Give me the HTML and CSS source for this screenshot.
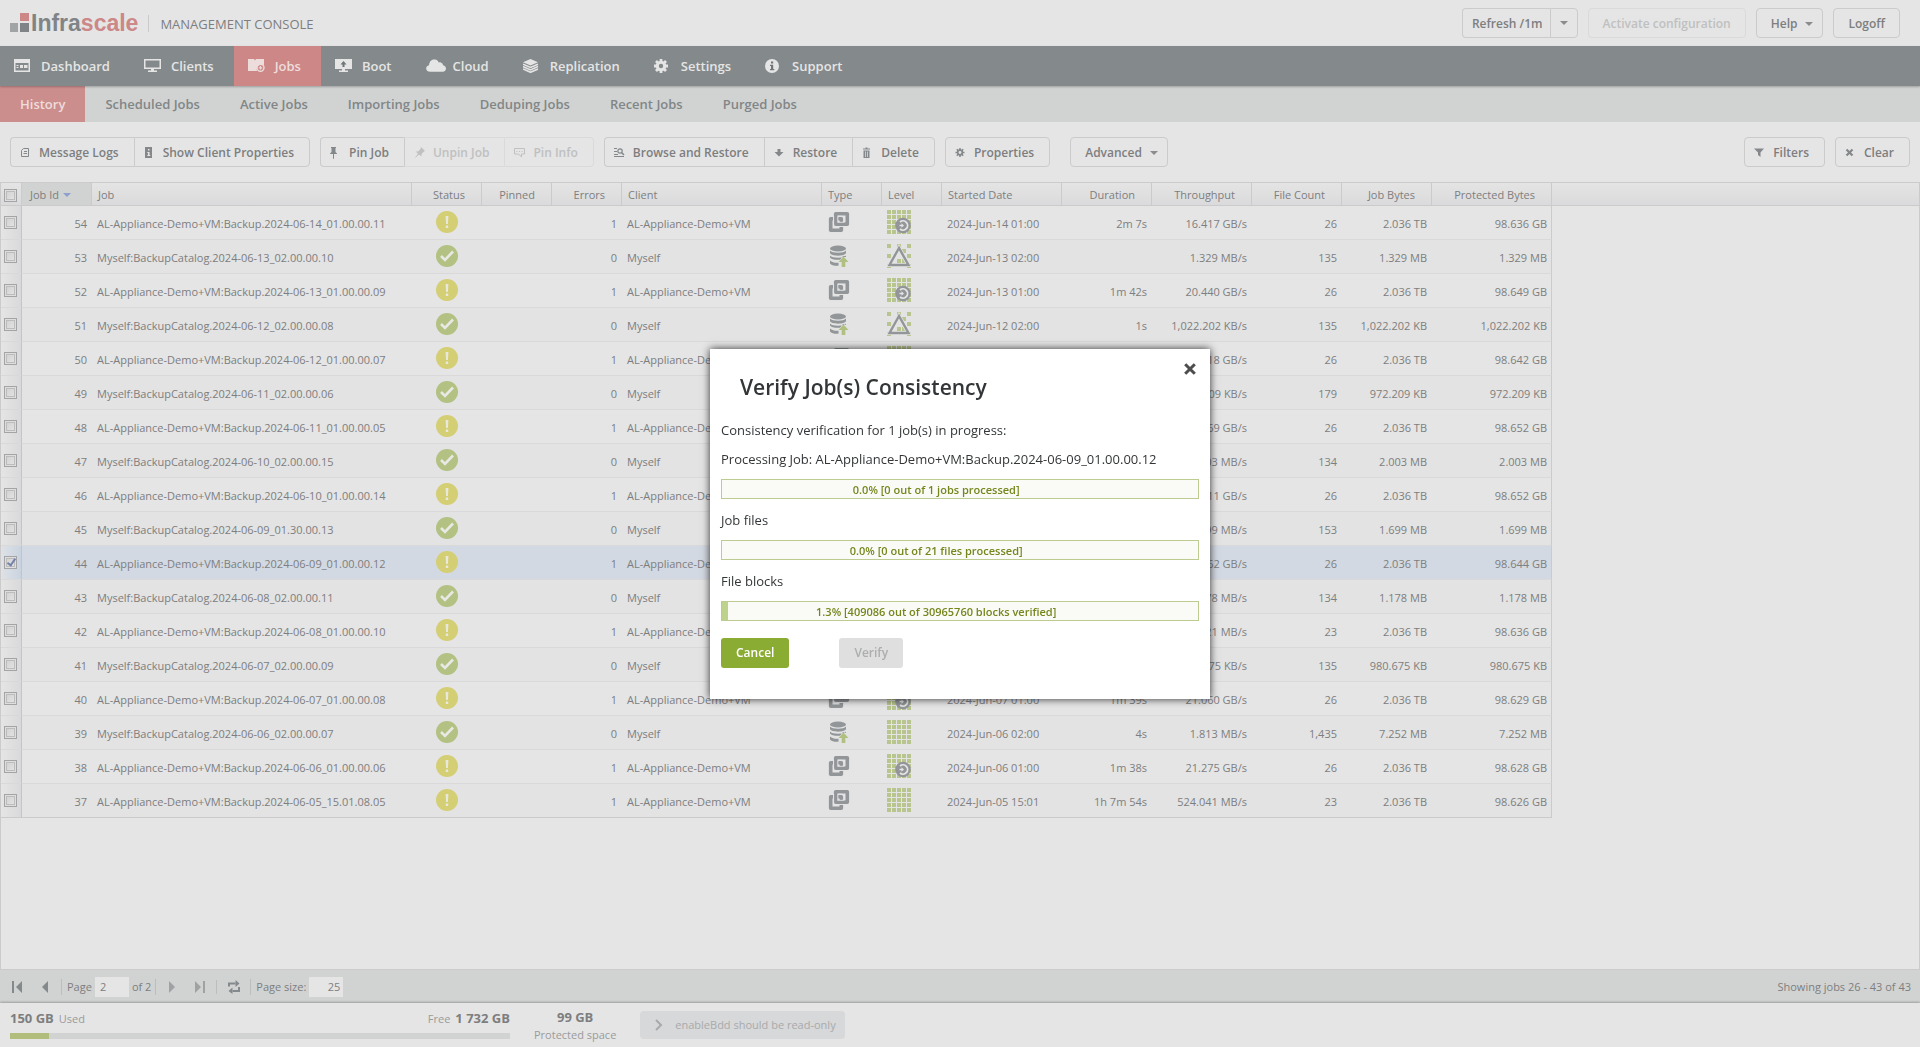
FILE: index.html
```html
<!DOCTYPE html>
<html lang="en">
<head>
    <meta charset="UTF-8">
    <meta name="viewport" content="width=device-width, initial-scale=1.0">
    <title>Infrascale Management Console</title>
    <link rel="stylesheet" href="styles.css">
</head>
<body>
    <!-- shared icons -->
    <svg class="sprite" aria-hidden="true">
        <symbol id="i-warn" viewBox="0 0 22 22"><circle cx="11" cy="11" r="11" fill="#d4ce74"/><path d="M9.6 5h2.8l-.5 8h-1.8zM9.8 14.6h2.4v2.4H9.8z" fill="#e8e8dc"/></symbol>
        <symbol id="i-ok" viewBox="0 0 22 22"><circle cx="11" cy="11" r="11" fill="#b3c183"/><path d="M5 11l4 4 8-8.500" fill="none" stroke="#e8e8e4" stroke-width="2.600"/></symbol>
        <symbol id="i-vm" viewBox="0 0 24 24">
            <g fill="none" stroke-linejoin="round">
                <path d="M8.700 3.700h11.600v10.600H8.700z" stroke="#929698" stroke-width="3.600"/>
                <path d="M3.700 8.700h10.600v11.600H3.700z" stroke="#e3e3e3" stroke-width="6"/>
                <path d="M3.700 8.700h10.600v11.600H3.700z" stroke="#929698" stroke-width="3.600"/>
                <path d="M8.700 6v8.300H17" stroke="#e3e3e3" stroke-width="5.400" stroke-linejoin="miter"/>
                <path d="M8.700 4v10.300H20" stroke="#929698" stroke-width="3.200"/>
                <path d="M11.800 8.700h2.500v3" stroke="#929698" stroke-width="2.400"/>
            </g>
        </symbol>
        <symbol id="i-db" viewBox="0 0 24 24">
            <g fill="#929698"><ellipse cx="11" cy="4.500" rx="8" ry="3"/><path d="M3 6.500c2 3 14 3 16 0V9c-1 3.500-15 3.500-16 0zM3 11.500c2 3 14 3 16 0V13l-3-1-3 3.700c-4 .4-9-.2-10-2.200zM3 16.500c2 2 5 2.500 8.500 2.300v3C8 22 4 21.500 3 19.500z"/></g>
            <path d="M16.500 12.500l5 5.500h-3.200v5h-3.600v-5h-3.200z" fill="#b0c080"/>
        </symbol>
        <symbol id="i-full" viewBox="0 0 24 24">
            <path d="M2 0v24M7 0v24M12 0v24M17 0v24M22 0v24" stroke="#b9c58e" stroke-width="4"/>
            <path d="M0 4.500h24M0 9.500h24M0 14.500h24M0 19.500h24" stroke="#e4e4e2"/>
        </symbol>
        <symbol id="i-inc" viewBox="0 0 24 24">
            <use href="#i-full"/>
            <circle cx="16" cy="15.500" r="7.800" fill="#929698"/>
            <path d="M13 12a4.600 4.600 0 1 1 0 7" fill="none" stroke="#e4e4e4" stroke-width="1.800"/>
            <path d="M12.500 14.700h2v-1.500l2.500 2.300-2.500 2.300v-1.500h-2z" fill="#e4e4e4"/>
        </symbol>
        <symbol id="i-diff" viewBox="0 0 24 24">
            <path d="M0 0h4v4H0zM10 0h4v4h-4zM20 0h4v4h-4zM15 5h4v4h-4zM0 10h4v4H0zM20 10h4v4h-4zM10 15h4v4h-4zM15 15h4v4h-4zM0 20h4v4H0zM20 20h4v4h-4z" fill="#b9c58e"/>
            <path d="M12 4L2.500 21h19z" fill="none" stroke="#e4e4e4" stroke-width="4"/>
            <path d="M12 4L2.500 21h19z" fill="none" stroke="#929698" stroke-width="2.400"/>
        </symbol>
    </svg>

    <header class="top">
        <a href="#" class="logo" aria-label="Infrascale">
            <svg width="20" height="20" viewBox="0 0 20 20"><path d="M0 10h8v9H0z" fill="#a1a4a4"/><path d="M10 0h9v8h-9z" fill="#cc8786"/><path d="M10 10h9v9h-9z" fill="#808487"/></svg>
            <span>Infra<b>scale</b></span>
        </a>
        <span class="product">MANAGEMENT CONSOLE</span>
        <div class="top-buttons">
            <div class="group">
                <button class="btn btn-refresh">Refresh /1m</button>
                <button class="btn btn-drop" aria-label="Refresh interval"><i class="caret"></i></button>
            </div>
            <button class="btn" disabled>Activate configuration</button>
            <button class="btn btn-menu">Help<i class="caret"></i></button>
            <button class="btn">Logoff</button>
        </div>
    </header>

    <nav class="main-nav">
        <a href="#"><svg viewBox="0 0 20 14"><path d="M0 0h16v13H0zM1.500 4v7.500h13V4z" fill="#e5e5e5" fill-rule="evenodd"/><path d="M2.500 6h2v1h-2zM2.500 8h2v1h-2zM6 6h3v3H6zM10 6h3.500v3H10z" fill="#e5e5e5"/></svg>Dashboard</a>
        <a href="#"><svg viewBox="0 0 20 14"><path d="M0 0h17v10H0zM1.500 1.500v7h14v-7z" fill="#e5e5e5" fill-rule="evenodd"/><path d="M7 10h3v1.500h3V13H4v-1.500h3z" fill="#e5e5e5"/></svg>Clients</a>
        <a href="#" class="active"><svg viewBox="0 0 20 14"><path d="M0 0h6l1 1.500L8 0h8v6a5 5 0 0 0-7 6H0z" fill="#eddcdc"/><circle cx="12.500" cy="8.800" r="3.500" fill="none" stroke="#eddcdc" stroke-width="1.400"/><path d="M12.500 7v3.600M10.700 8.800h3.600" stroke="#eddcdc" stroke-width="1.200"/></svg>Jobs</a>
        <a href="#"><svg viewBox="0 0 20 14"><path d="M0 0h17v10H0z" fill="#e5e5e5"/><path d="M8.500 2l3 3.500h-2V8h-2V5.500h-2z" fill="#6f7578"/><path d="M7 10h3v1.500h3V13H4v-1.500h3z" fill="#e5e5e5"/></svg>Boot</a>
        <a href="#"><svg viewBox="0 0 21 14"><path d="M4.500 13C-1 13-1 7 3.200 6.300 3.500 2 6-.5 9.500.2c2 .3 3.200 1.500 3.800 3 2.500-.6 4.400 1 4.600 3C22.300 7 21.800 13 17.500 13z" fill="#e5e5e5"/></svg>Cloud</a>
        <a href="#"><svg viewBox="0 0 20 14"><path d="M7.500 0L15 3.300 7.500 6.600 0 3.300z" fill="#e5e5e5"/><path d="M0 5.200L7.500 8.500 15 5.200M0 7.600l7.500 3.300L15 7.600M0 10l7.500 3.300L15 10" fill="none" stroke="#e5e5e5" stroke-width="1.600"/></svg>Replication</a>
        <a href="#"><svg viewBox="0 0 20 14"><circle cx="7" cy="7" r="3.700" fill="none" stroke="#e5e5e5" stroke-width="3"/><path d="M7 0v3M7 11v3M0 7h3M11 7h3M2 2l2 2M10 10l2 2M12 2l-2 2M4 10l-2 2" stroke="#e5e5e5" stroke-width="2.800"/></svg>Settings</a>
        <a href="#"><svg viewBox="0 0 20 14"><circle cx="7" cy="7" r="7" fill="#e5e5e5"/><path d="M6 2.500h2.200v2H6zM5 5.700h3.200v4.300H9.300v1.300H5V10h1V7H5z" fill="#6f7578"/></svg>Support</a>
    </nav>

    <nav class="sub-nav">
        <a href="#" class="active">History</a>
        <a href="#">Scheduled Jobs</a>
        <a href="#">Active Jobs</a>
        <a href="#">Importing Jobs</a>
        <a href="#">Deduping Jobs</a>
        <a href="#">Recent Jobs</a>
        <a href="#">Purged Jobs</a>
    </nav>

    <div class="toolbar">
        <div class="group">
            <button class="btn btn-icon"><svg viewBox="0 0 12 12"><path d="M3.500 1.500h5v8h-7v-6zM4 4.500h3M3.500 6.500H7" fill="none" stroke="currentColor"/></svg>Message Logs</button>
            <button class="btn btn-icon"><svg viewBox="0 0 12 12"><path d="M1 0h7v11H1z" fill="currentColor"/><path d="M4 2h1.500v1.500H4zM3.300 5h2.200v3h.8v1h-3V8H4V6h-.7z" fill="#e5e5e5"/></svg>Show Client Properties</button>
        </div>
        <div class="group">
            <button class="btn btn-icon"><svg viewBox="0 0 12 12"><path d="M1 0h5v1H5.500v4L7 6.500V7H4v4.500L3.500 12 3 11.500V7H0v-.5L1.500 5V1H1z" fill="currentColor"/></svg>Pin Job</button>
            <button class="btn btn-icon" disabled><svg viewBox="0 0 12 12"><path d="M7 0l4 4-1 .5-2.500 2.500v2.500L5 7.500.5 11.500 4 6.500 1.500 4.500H4L6.500 2z" fill="currentColor"/></svg>Unpin Job</button>
            <button class="btn btn-icon" disabled><svg viewBox="0 0 12 12"><path d="M.5 1.500h10v5.500h-3v3l-3-3h-4zM2.500 4.500h1M5 4.500h1M7.500 4.500h1" fill="none" stroke="currentColor"/></svg>Pin Info</button>
        </div>
        <div class="group">
            <button class="btn btn-icon"><svg viewBox="0 0 12 12"><path d="M0 1.500h3M0 4.500h3M0 7.500h4M0 9.500h10" stroke="currentColor"/><circle cx="6" cy="4" r="2.200" fill="none" stroke="currentColor" stroke-width="1.200"/><path d="M7.500 5.500L10 8" stroke="currentColor" stroke-width="1.600"/></svg>Browse and Restore</button>
            <button class="btn btn-icon"><svg viewBox="0 0 12 12"><path d="M3.500 2h3v3h3L5 9.500.5 5h3z" fill="currentColor"/></svg>Restore</button>
            <button class="btn btn-icon"><svg viewBox="0 0 12 12"><path d="M1 1.500h2.500V.5h2v1H8v1H1zM1.500 3.500h6V11h-6z" fill="currentColor"/><path d="M3.500 4.500v5.500M5.500 4.500v5.500" stroke="#e5e5e5" stroke-width=".7"/></svg>Delete</button>
        </div>
        <button class="btn btn-icon"><svg viewBox="0 0 12 12"><circle cx="5" cy="5.500" r="2.300" fill="none" stroke="currentColor" stroke-width="1.700"/><path d="M5 1v2M5 8v2M.5 5.500h2M7.500 5.500h2M1.800 2.300l1.400 1.400M6.800 7.300l1.400 1.400M8.200 2.300L6.800 3.700M3.200 7.300L1.800 8.700" stroke="currentColor" stroke-width="1.500"/></svg>Properties</button>
        <button class="btn btn-menu advanced">Advanced<i class="caret"></i></button>
        <div class="toolbar-right">
            <button class="btn btn-icon"><svg viewBox="0 0 12 12"><path d="M0 1.500h10L6.500 5.500v4.500L4 8V5.500z" fill="currentColor"/></svg>Filters</button>
            <button class="btn btn-icon"><svg viewBox="0 0 12 12"><path d="M1.500 2.500l6 6M7.500 2.500l-6 6" stroke="currentColor" stroke-width="2.200"/></svg>Clear</button>
        </div>
    </div>

    <main class="grid">
        <table>
            <colgroup>
                <col class="w-check"><col class="w-70"><col class="w-job"><col class="w-70"><col class="w-70"><col class="w-70"><col class="w-client">
                <col class="w-60"><col class="w-60"><col class="w-date"><col class="w-90"><col class="w-100"><col class="w-90"><col class="w-90"><col class="w-date"><col>
            </colgroup>
            <thead>
                <tr>
                    <th class="check"><input type="checkbox" aria-label="Select all jobs"></th>
                    <th class="sorted">Job Id <i class="caret"></i></th>
                    <th>Job</th>
                    <th class="num">Status</th>
                    <th class="num">Pinned</th>
                    <th class="num">Errors</th>
                    <th>Client</th>
                    <th>Type</th>
                    <th>Level</th>
                    <th>Started Date</th>
                    <th class="num">Duration</th>
                    <th class="num">Throughput</th>
                    <th class="num">File Count</th>
                    <th class="num">Job Bytes</th>
                    <th class="num">Protected Bytes</th>
                    <th></th>
                </tr>
            </thead>
            <tbody id="jobs"></tbody>
        </table>
    </main>

    <div class="pager">
        <button aria-label="First page"><svg width="12" height="12" viewBox="0 0 12 12"><path d="M1 0h2v12H1zM11 0v12L5 6z" fill="currentColor"/></svg></button>
        <button aria-label="Previous page"><svg width="12" height="12" viewBox="0 0 12 12"><path d="M9 0v12L3 6z" fill="currentColor"/></svg></button>
        <label for="page">Page</label>
        <input type="text" id="page" value="2">
        <span class="of">of 2</span>
        <button class="off" aria-label="Next page"><svg width="12" height="12" viewBox="0 0 12 12"><path d="M3 0v12l6-6z" fill="currentColor"/></svg></button>
        <button class="off" aria-label="Last page"><svg width="12" height="12" viewBox="0 0 12 12"><path d="M9 0h2v12H9zM1 0v12l6-6z" fill="currentColor"/></svg></button>
        <button class="reload" aria-label="Reload"><svg width="12" height="14" viewBox="0 0 12 14"><path d="M1 6.500V3.500h6.500M11 7v4H4.500" fill="none" stroke="currentColor" stroke-width="2"/><path d="M7.500 0l4 3.500-4 3.500zM4.500 7.500v6.500L.5 11z" fill="currentColor"/></svg></button>
        <label for="page-size">Page size:</label>
        <input type="text" id="page-size" class="size" value="25">
        <span class="showing">Showing jobs 26 - 43 of 43</span>
    </div>

    <footer class="status-bar">
        <div class="storage">
            <div class="storage-text">
                <span><b>150 GB</b>Used</span>
                <span>Free<b>1 732 GB</b></span>
            </div>
            <div class="storage-bar"><div style="width: 7.8%"></div></div>
        </div>
        <div class="protected"><b>99 GB</b>Protected space</div>
        <button class="notice" disabled><svg width="8" height="12" viewBox="0 0 8 12"><path d="M1 1l5 5-5 5" fill="none" stroke="currentColor" stroke-width="2"/></svg>enableBdd should be read-only</button>
    </footer>

    <div class="overlay">
        <div class="dialog" role="dialog" aria-labelledby="dialog-title">
            <button class="close" aria-label="Close"><svg width="12" height="12" viewBox="0 0 12 12"><path d="M1.200 1.200l9.600 9.600M10.800 1.200l-9.600 9.600" stroke="#4d4d4f" stroke-width="3"/></svg></button>
            <h1 id="dialog-title">Verify Job(s) Consistency</h1>
            <p>Consistency verification for 1 job(s) in progress:</p>
            <p>Processing Job: AL-Appliance-Demo+VM:Backup.2024-06-09_01.00.00.12</p>
            <div class="progress"><span>0.0% [0 out of 1 jobs processed]</span></div>
            <p>Job files</p>
            <div class="progress"><span>0.0% [0 out of 21 files processed]</span></div>
            <p>File blocks</p>
            <div class="progress"><div class="fill" style="width: 1.3%"></div><span>1.3% [409086 out of 30965760 blocks verified]</span></div>
            <div class="actions">
                <button class="cancel">Cancel</button>
                <button class="verify" disabled>Verify</button>
            </div>
        </div>
    </div>

    <script src="script.js"></script>
</body>
</html>
```

FILE: styles.css
```css
:root {
    --bg: #e5e5e5;
    --line: #cbcbcb;
    --text: #7d7e7f;
    --bar: #d1d3d2;
    --nav: #84898b;
    --red: #cc8786;
    --green: #8aac32;
}

* {
    margin: 0;
    padding: 0;
    box-sizing: border-box;
}

body {
    display: flex;
    flex-direction: column;
    height: 100vh;
    overflow: hidden;
    background: var(--bg);
    color: var(--text);
    font: 11px/16px "Open Sans", sans-serif;
}

button, input {
    font: inherit;
    color: inherit;
}

a {
    color: inherit;
    text-decoration: none;
}

.sprite {
    position: absolute;
    width: 0;
    height: 0;
}

/* top bar */
.top {
    display: flex;
    align-items: center;
    height: 46px;
    padding: 0 20px 0 10px;
}

.logo {
    display: flex;
    align-items: center;
    gap: 1px;
    color: #808487;
    font: bold 23px/26px "Liberation Sans", Arial, sans-serif;
}

.logo b {
    color: var(--red);
}

.product {
    margin-left: 10px;
    padding: 1px 0 0 11px;
    border-left: 1px solid var(--line);
    font-size: 13px;
}

.top-buttons {
    display: flex;
    gap: 10px;
    margin-left: auto;
}

.btn {
    display: flex;
    align-items: center;
    height: 30px;
    padding: 1px 14px 0;
    border: 1px solid var(--line);
    border-radius: 4px;
    background: none;
    font-size: 12px;
    font-weight: 600;
    white-space: nowrap;
}

.btn:disabled {
    color: #bfc0c0;
    border-color: #dadada;
}

.group {
    display: flex;
}

.group .btn:not(:last-child) {
    border-right: 0;
    border-top-right-radius: 0;
    border-bottom-right-radius: 0;
}

.group .btn:not(:first-child) {
    border-top-left-radius: 0;
    border-bottom-left-radius: 0;
}

.group .btn:enabled + .btn:disabled {
    border-left-color: var(--line);
}

.btn-refresh {
    padding: 1px 7px 0 9px;
}

.btn-drop {
    padding: 0 9px;
}

.btn-menu {
    gap: 8px;
    padding-right: 9px;
}

.caret {
    display: inline-block;
    border: 4px solid transparent;
    border-top-color: #8a8c8e;
    border-bottom: 0;
}

/* navigation */
.main-nav {
    display: flex;
    height: 40px;
    background: var(--nav);
    box-shadow: 0 1px 2px rgba(0, 0, 0, 0.25);
    position: relative;
    color: #e5e5e5;
    font-size: 13px;
    font-weight: 600;
}

.main-nav a {
    display: flex;
    align-items: center;
    padding: 0 20px 0 14px;
}

.main-nav svg {
    flex: none;
    width: 20px;
    height: 14px;
    margin-right: 7px;
}

.main-nav .active {
    background: var(--red);
    color: #efdcdc;
}

.sub-nav {
    display: flex;
    height: 36px;
    background: var(--bar);
    color: #818687;
    font-size: 13px;
    font-weight: 600;
}

.sub-nav a {
    padding: 0 20px;
    line-height: 36px;
}

.sub-nav .active {
    background: #cc8e8d;
    color: #efdcdc;
}

/* toolbar */
.toolbar {
    display: flex;
    gap: 10px;
    padding: 15px 10px;
}

.toolbar-right {
    display: flex;
    gap: 10px;
    margin-left: auto;
}

.btn-icon {
    padding: 1px 15px 0 9px;
}

.btn-icon svg {
    width: 12px;
    height: 12px;
    margin-right: 7px;
    color: #84888a;
}

.btn:disabled svg {
    color: inherit;
}

.advanced {
    margin-left: 10px;
}

/* jobs table */
.grid {
    flex: 1;
    border: 1px solid var(--line);
    border-bottom: 0;
    overflow: hidden;
}

table {
    width: 100%;
    table-layout: fixed;
    border-spacing: 0;
}

.w-check { width: 21px; }
.w-60 { width: 60px; }
.w-70 { width: 70px; }
.w-90 { width: 90px; }
.w-100 { width: 100px; }
.w-date { width: 120px; }
.w-client { width: 200px; }
.w-job { width: 320px; }

th {
    height: 23px;
    padding: 1px 6px 0;
    border-right: 1px solid var(--line);
    border-bottom: 1px solid var(--line);
    background: linear-gradient(#e4e4e4, #e0e0e1 45%, #dadadc);
    font-weight: 400;
    text-align: left;
}

th:last-child {
    border-right: 0;
}

th.num {
    padding-right: 16px;
    text-align: right;
}

th.sorted {
    padding-left: 8px;
    background: #d1d3d2;
}

th .caret {
    border-top-color: #8ba0cc;
    margin: 0 0 2px 1px;
}

td {
    height: 34px;
    padding: 3px 5px 0;
    border-bottom: 1px solid #d9d9d9;
    white-space: nowrap;
}

tr:nth-child(even) td {
    background: #e3e3e3;
}

tr.selected td {
    background: #d3d9e2;
}

tbody tr:last-child td {
    border-bottom-color: var(--line);
}

td:nth-last-child(2) {
    border-right: 1px solid var(--line);
    padding-right: 4px;
}

tr td.filler {
    border: 0;
    background: none;
}

td.num {
    text-align: right;
}

td.icon {
    padding: 0 5px 2px;
}

td.status {
    padding: 0 5px 2px;
    text-align: center;
}

td svg {
    display: inline-block;
    width: 24px;
    height: 24px;
    vertical-align: middle;
}

td.status svg {
    width: 22px;
    height: 22px;
}

th.check {
    padding: 3px 3px 0;
}

td.check {
    padding: 0 3px;
    border-right: 1px solid #c4c5c8;
    background: linear-gradient(90deg, #e5e5e5, #d9d9db) !important;
}

tr.selected td.check {
    border-right-color: #b4c8dc;
    background: linear-gradient(90deg, #dfe2e6, #c9d3e0) !important;
}

input[type="checkbox"] {
    appearance: none;
    display: block;
    position: relative;
    width: 13px;
    height: 13px;
    border: 1px solid #a3a4a5;
    background: linear-gradient(135deg, #cfcfcf, #e6e6e6);
    box-shadow: inset 0 0 0 1px #dedede, inset 0 0 0 2px #bcbcbc;
}

input[type="checkbox"]:checked::after {
    content: "";
    box-sizing: border-box;
    position: absolute;
    left: 4px;
    top: 0;
    width: 5px;
    height: 9px;
    border: solid #7381ab;
    border-width: 0 2px 2px 0;
    transform: rotate(35deg);
}

/* pager */
.pager {
    display: flex;
    align-items: center;
    height: 34px;
    padding: 0 9px 0 11px;
    border-top: 1px solid var(--line);
    background: var(--bar);
}

.pager button {
    display: flex;
    margin-right: 10px;
    border: 0;
    background: none;
    color: #84898b;
}

.pager button + button {
    margin-left: 6px;
}

.pager button.off {
    color: #9fa2a3;
}

.pager label {
    padding-left: 5px;
    border-left: 1px solid #bcbebe;
}

.pager button.reload {
    margin-left: 0;
    padding-left: 11px;
    border-left: 1px solid #bcbebe;
}

.pager input {
    width: 34px;
    height: 20px;
    margin: 0 3px;
    padding: 0 5px;
    border: 0;
    background: var(--bg);
}

.pager .size {
    padding: 0 3px;
    text-align: right;
}

.of {
    margin-right: 10px;
    padding-right: 4px;
    border-right: 1px solid #bcbebe;
}

.showing {
    margin-left: auto;
}

/* footer */
.status-bar {
    display: flex;
    gap: 24px;
    height: 44px;
    padding: 6px 10px;
    box-shadow: 0 -1px 2px rgba(0, 0, 0, 0.25);
    color: #9a9b9c;
}

.status-bar b {
    color: #7d7e7f;
    font-size: 13px;
}

.storage {
    width: 500px;
}

.storage-text {
    display: flex;
    justify-content: space-between;
    line-height: 18px;
}

.storage-text span {
    display: flex;
    gap: 5px;
    align-items: baseline;
}

.storage-bar {
    height: 6px;
    margin-top: 5px;
    background: var(--bar);
}

.storage-bar div {
    height: 6px;
    background: #b1be7b;
}

.protected {
    display: flex;
    flex-direction: column;
    align-items: center;
    line-height: 17px;
}

.notice {
    display: flex;
    align-items: center;
    gap: 12px;
    height: 28px;
    margin-top: 2px;
    padding: 0 9px 0 15px;
    border: 0;
    border-radius: 4px;
    background: #d7d8d9;
    color: #a8aaac;
}

/* dialog */
.overlay {
    position: fixed;
    inset: 0;
    display: flex;
    align-items: center;
    justify-content: center;
}

.dialog {
    position: relative;
    width: 500px;
    padding: 24px 11px 31px;
    background: #fff;
    box-shadow: 0 0 8px rgba(0, 0, 0, 0.8);
    color: #333638;
    font-size: 13px;
    line-height: 20px;
}

.dialog h1 {
    margin: 0 19px 19px;
    font-size: 21px;
    font-weight: 600;
    line-height: 28px;
}

.close {
    position: absolute;
    top: 14px;
    right: 14px;
    display: flex;
    border: 0;
    background: none;
}

.dialog p {
    margin-bottom: 9px;
}

.progress {
    position: relative;
    height: 20px;
    margin: 10px 0 11px;
    border: 1px solid #bccb90;
    background: #fafbf7;
    color: #75861c;
    font-size: 11px;
    font-weight: 600;
    text-align: center;
}

.progress span {
    position: relative;
    display: block;
    width: 90%;
}

.progress .fill {
    position: absolute;
    top: 0;
    left: 0;
    height: 18px;
    background: #bdd28c;
}

.actions {
    display: flex;
    gap: 50px;
    margin-top: 17px;
}

.actions button {
    height: 30px;
    padding: 0 15px;
    border: 0;
    border-radius: 3px;
    font-size: 12px;
    font-weight: 600;
}

.cancel {
    background: var(--green);
    color: #fff;
}

.verify {
    background: #dfdfdf;
    color: #acaeae;
}
```

FILE: script.js
```js
const VM = "AL-Appliance-Demo+VM";
const CATALOG = "Myself";

// id, client, backup stamp, level, started, duration, throughput, files, job bytes, protected bytes
const jobs = [
    [54, VM, "2024-06-14_01.00.00.11", "inc", "2024-Jun-14 01:00", "2m 7s", "16.417 GB/s", "26", "2.036 TB", "98.636 GB"],
    [53, CATALOG, "2024-06-13_02.00.00.10", "diff", "2024-Jun-13 02:00", "", "1.329 MB/s", "135", "1.329 MB", "1.329 MB"],
    [52, VM, "2024-06-13_01.00.00.09", "inc", "2024-Jun-13 01:00", "1m 42s", "20.440 GB/s", "26", "2.036 TB", "98.649 GB"],
    [51, CATALOG, "2024-06-12_02.00.00.08", "diff", "2024-Jun-12 02:00", "1s", "1,022.202 KB/s", "135", "1,022.202 KB", "1,022.202 KB"],
    [50, VM, "2024-06-12_01.00.00.07", "inc", "2024-Jun-12 01:00", "1m 39s", "21.018 GB/s", "26", "2.036 TB", "98.642 GB"],
    [49, CATALOG, "2024-06-11_02.00.00.06", "diff", "2024-Jun-11 02:00", "1s", "972.209 KB/s", "179", "972.209 KB", "972.209 KB"],
    [48, VM, "2024-06-11_01.00.00.05", "inc", "2024-Jun-11 01:00", "1m 39s", "21.069 GB/s", "26", "2.036 TB", "98.652 GB"],
    [47, CATALOG, "2024-06-10_02.00.00.15", "diff", "2024-Jun-10 02:00", "1s", "2.003 MB/s", "134", "2.003 MB", "2.003 MB"],
    [46, VM, "2024-06-10_01.00.00.14", "inc", "2024-Jun-10 01:00", "1m 38s", "21.211 GB/s", "26", "2.036 TB", "98.652 GB"],
    [45, CATALOG, "2024-06-09_01.30.00.13", "diff", "2024-Jun-09 01:30", "1s", "1.699 MB/s", "153", "1.699 MB", "1.699 MB"],
    [44, VM, "2024-06-09_01.00.00.12", "inc", "2024-Jun-09 01:00", "1m 39s", "21.062 GB/s", "26", "2.036 TB", "98.644 GB"],
    [43, CATALOG, "2024-06-08_02.00.00.11", "diff", "2024-Jun-08 02:00", "1s", "1.178 MB/s", "134", "1.178 MB", "1.178 MB"],
    [42, VM, "2024-06-08_01.00.00.10", "full", "2024-Jun-08 01:00", "1h 7m 54s", "524.021 MB/s", "23", "2.036 TB", "98.636 GB"],
    [41, CATALOG, "2024-06-07_02.00.00.09", "diff", "2024-Jun-07 02:00", "1s", "980.675 KB/s", "135", "980.675 KB", "980.675 KB"],
    [40, VM, "2024-06-07_01.00.00.08", "inc", "2024-Jun-07 01:00", "1m 39s", "21.060 GB/s", "26", "2.036 TB", "98.629 GB"],
    [39, CATALOG, "2024-06-06_02.00.00.07", "full", "2024-Jun-06 02:00", "4s", "1.813 MB/s", "1,435", "7.252 MB", "7.252 MB"],
    [38, VM, "2024-06-06_01.00.00.06", "inc", "2024-Jun-06 01:00", "1m 38s", "21.275 GB/s", "26", "2.036 TB", "98.628 GB"],
    [37, VM, "2024-06-05_15.01.08.05", "full", "2024-Jun-05 15:01", "1h 7m 54s", "524.041 MB/s", "23", "2.036 TB", "98.626 GB"]
];
const selectedId = 44;

const icon = name => `<svg><use href="#i-${name}"/></svg>`;

document.getElementById("jobs").innerHTML = jobs.map(([id, client, stamp, level, started, ...numbers]) => {
    const vm = client === VM;
    const selected = id === selectedId;
    return `<tr${selected ? ' class="selected"' : ""}>
        <td class="check"><input type="checkbox" aria-label="Select job ${id}"${selected ? " checked" : ""}></td>
        <td class="num">${id}</td>
        <td>${client}:${vm ? "Backup" : "BackupCatalog"}.${stamp}</td>
        <td class="status">${icon(vm ? "warn" : "ok")}</td>
        <td></td>
        <td class="num">${vm ? 1 : 0}</td>
        <td>${client}</td>
        <td class="icon">${icon(vm ? "vm" : "db")}</td>
        <td class="icon">${icon(level)}</td>
        <td>${started}</td>
        ${numbers.map(n => `<td class="num">${n}</td>`).join("")}
        <td class="filler"></td>
    </tr>`;
}).join("");
```
